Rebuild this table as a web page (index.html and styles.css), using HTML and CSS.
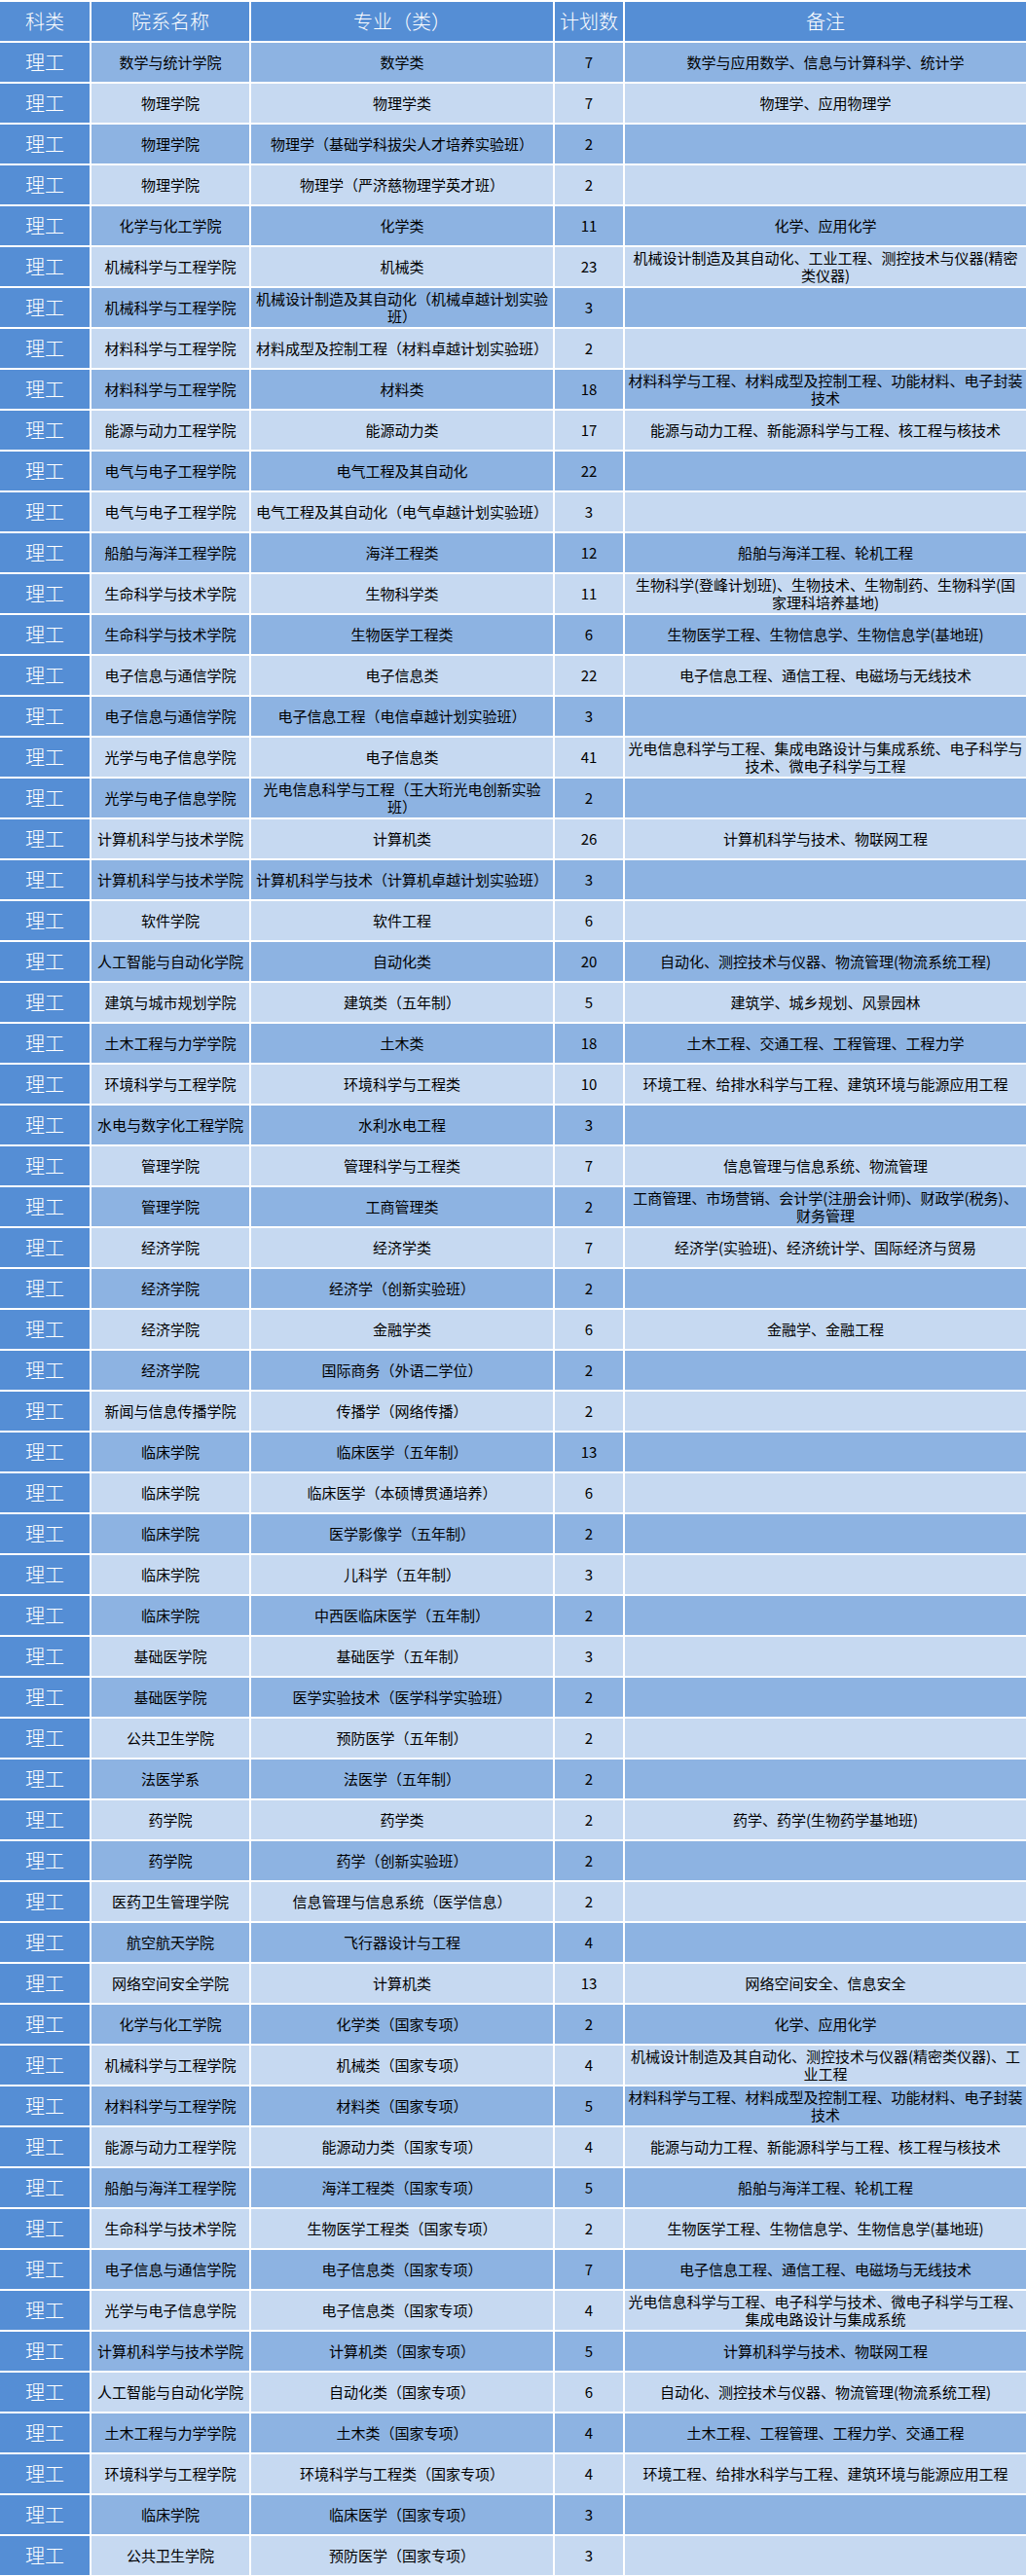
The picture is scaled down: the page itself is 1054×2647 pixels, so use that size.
FILE: index.html
```html
<!DOCTYPE html>
<html lang="zh-CN">
<head>
<meta charset="utf-8">
<title>招生计划</title>
<link rel="stylesheet" href="styles.css">
</head>
<body>
<div class="sheet">
<div class="r hd"><div>科类</div><div>院系名称</div><div>专业（类）</div><div>计划数</div><div>备注</div></div>
<div class="r m"><div class="k">理工</div><div class="c">数学与统计学院</div><div class="c">数学类</div><div class="c">7</div><div class="c">数学与应用数学、信息与计算科学、统计学</div></div>
<div class="r l"><div class="k">理工</div><div class="c">物理学院</div><div class="c">物理学类</div><div class="c">7</div><div class="c">物理学、应用物理学</div></div>
<div class="r m"><div class="k">理工</div><div class="c">物理学院</div><div class="c">物理学（基础学科拔尖人才培养实验班）</div><div class="c">2</div><div class="c"></div></div>
<div class="r l"><div class="k">理工</div><div class="c">物理学院</div><div class="c">物理学（严济慈物理学英才班）</div><div class="c">2</div><div class="c"></div></div>
<div class="r m"><div class="k">理工</div><div class="c">化学与化工学院</div><div class="c">化学类</div><div class="c">11</div><div class="c">化学、应用化学</div></div>
<div class="r l"><div class="k">理工</div><div class="c">机械科学与工程学院</div><div class="c">机械类</div><div class="c">23</div><div class="c">机械设计制造及其自动化、工业工程、测控技术与仪器(精密<br>类仪器)</div></div>
<div class="r m"><div class="k">理工</div><div class="c">机械科学与工程学院</div><div class="c">机械设计制造及其自动化（机械卓越计划实验<br>班）</div><div class="c">3</div><div class="c"></div></div>
<div class="r l"><div class="k">理工</div><div class="c">材料科学与工程学院</div><div class="c">材料成型及控制工程（材料卓越计划实验班）</div><div class="c">2</div><div class="c"></div></div>
<div class="r m"><div class="k">理工</div><div class="c">材料科学与工程学院</div><div class="c">材料类</div><div class="c">18</div><div class="c">材料科学与工程、材料成型及控制工程、功能材料、电子封装<br>技术</div></div>
<div class="r l"><div class="k">理工</div><div class="c">能源与动力工程学院</div><div class="c">能源动力类</div><div class="c">17</div><div class="c">能源与动力工程、新能源科学与工程、核工程与核技术</div></div>
<div class="r m"><div class="k">理工</div><div class="c">电气与电子工程学院</div><div class="c">电气工程及其自动化</div><div class="c">22</div><div class="c"></div></div>
<div class="r l"><div class="k">理工</div><div class="c">电气与电子工程学院</div><div class="c">电气工程及其自动化（电气卓越计划实验班）</div><div class="c">3</div><div class="c"></div></div>
<div class="r m"><div class="k">理工</div><div class="c">船舶与海洋工程学院</div><div class="c">海洋工程类</div><div class="c">12</div><div class="c">船舶与海洋工程、轮机工程</div></div>
<div class="r l"><div class="k">理工</div><div class="c">生命科学与技术学院</div><div class="c">生物科学类</div><div class="c">11</div><div class="c">生物科学(登峰计划班)、生物技术、生物制药、生物科学(国<br>家理科培养基地)</div></div>
<div class="r m"><div class="k">理工</div><div class="c">生命科学与技术学院</div><div class="c">生物医学工程类</div><div class="c">6</div><div class="c">生物医学工程、生物信息学、生物信息学(基地班)</div></div>
<div class="r l"><div class="k">理工</div><div class="c">电子信息与通信学院</div><div class="c">电子信息类</div><div class="c">22</div><div class="c">电子信息工程、通信工程、电磁场与无线技术</div></div>
<div class="r m"><div class="k">理工</div><div class="c">电子信息与通信学院</div><div class="c">电子信息工程（电信卓越计划实验班）</div><div class="c">3</div><div class="c"></div></div>
<div class="r l"><div class="k">理工</div><div class="c">光学与电子信息学院</div><div class="c">电子信息类</div><div class="c">41</div><div class="c">光电信息科学与工程、集成电路设计与集成系统、电子科学与<br>技术、微电子科学与工程</div></div>
<div class="r m"><div class="k">理工</div><div class="c">光学与电子信息学院</div><div class="c">光电信息科学与工程（王大珩光电创新实验<br>班）</div><div class="c">2</div><div class="c"></div></div>
<div class="r l"><div class="k">理工</div><div class="c">计算机科学与技术学院</div><div class="c">计算机类</div><div class="c">26</div><div class="c">计算机科学与技术、物联网工程</div></div>
<div class="r m"><div class="k">理工</div><div class="c">计算机科学与技术学院</div><div class="c">计算机科学与技术（计算机卓越计划实验班）</div><div class="c">3</div><div class="c"></div></div>
<div class="r l"><div class="k">理工</div><div class="c">软件学院</div><div class="c">软件工程</div><div class="c">6</div><div class="c"></div></div>
<div class="r m"><div class="k">理工</div><div class="c">人工智能与自动化学院</div><div class="c">自动化类</div><div class="c">20</div><div class="c">自动化、测控技术与仪器、物流管理(物流系统工程)</div></div>
<div class="r l"><div class="k">理工</div><div class="c">建筑与城市规划学院</div><div class="c">建筑类（五年制）</div><div class="c">5</div><div class="c">建筑学、城乡规划、风景园林</div></div>
<div class="r m"><div class="k">理工</div><div class="c">土木工程与力学学院</div><div class="c">土木类</div><div class="c">18</div><div class="c">土木工程、交通工程、工程管理、工程力学</div></div>
<div class="r l"><div class="k">理工</div><div class="c">环境科学与工程学院</div><div class="c">环境科学与工程类</div><div class="c">10</div><div class="c">环境工程、给排水科学与工程、建筑环境与能源应用工程</div></div>
<div class="r m"><div class="k">理工</div><div class="c">水电与数字化工程学院</div><div class="c">水利水电工程</div><div class="c">3</div><div class="c"></div></div>
<div class="r l"><div class="k">理工</div><div class="c">管理学院</div><div class="c">管理科学与工程类</div><div class="c">7</div><div class="c">信息管理与信息系统、物流管理</div></div>
<div class="r m"><div class="k">理工</div><div class="c">管理学院</div><div class="c">工商管理类</div><div class="c">2</div><div class="c">工商管理、市场营销、会计学(注册会计师)、财政学(税务)、<br>财务管理</div></div>
<div class="r l"><div class="k">理工</div><div class="c">经济学院</div><div class="c">经济学类</div><div class="c">7</div><div class="c">经济学(实验班)、经济统计学、国际经济与贸易</div></div>
<div class="r m"><div class="k">理工</div><div class="c">经济学院</div><div class="c">经济学（创新实验班）</div><div class="c">2</div><div class="c"></div></div>
<div class="r l"><div class="k">理工</div><div class="c">经济学院</div><div class="c">金融学类</div><div class="c">6</div><div class="c">金融学、金融工程</div></div>
<div class="r m"><div class="k">理工</div><div class="c">经济学院</div><div class="c">国际商务（外语二学位）</div><div class="c">2</div><div class="c"></div></div>
<div class="r l"><div class="k">理工</div><div class="c">新闻与信息传播学院</div><div class="c">传播学（网络传播）</div><div class="c">2</div><div class="c"></div></div>
<div class="r m"><div class="k">理工</div><div class="c">临床学院</div><div class="c">临床医学（五年制）</div><div class="c">13</div><div class="c"></div></div>
<div class="r l"><div class="k">理工</div><div class="c">临床学院</div><div class="c">临床医学（本硕博贯通培养）</div><div class="c">6</div><div class="c"></div></div>
<div class="r m"><div class="k">理工</div><div class="c">临床学院</div><div class="c">医学影像学（五年制）</div><div class="c">2</div><div class="c"></div></div>
<div class="r l"><div class="k">理工</div><div class="c">临床学院</div><div class="c">儿科学（五年制）</div><div class="c">3</div><div class="c"></div></div>
<div class="r m"><div class="k">理工</div><div class="c">临床学院</div><div class="c">中西医临床医学（五年制）</div><div class="c">2</div><div class="c"></div></div>
<div class="r l"><div class="k">理工</div><div class="c">基础医学院</div><div class="c">基础医学（五年制）</div><div class="c">3</div><div class="c"></div></div>
<div class="r m"><div class="k">理工</div><div class="c">基础医学院</div><div class="c">医学实验技术（医学科学实验班）</div><div class="c">2</div><div class="c"></div></div>
<div class="r l"><div class="k">理工</div><div class="c">公共卫生学院</div><div class="c">预防医学（五年制）</div><div class="c">2</div><div class="c"></div></div>
<div class="r m"><div class="k">理工</div><div class="c">法医学系</div><div class="c">法医学（五年制）</div><div class="c">2</div><div class="c"></div></div>
<div class="r l"><div class="k">理工</div><div class="c">药学院</div><div class="c">药学类</div><div class="c">2</div><div class="c">药学、药学(生物药学基地班)</div></div>
<div class="r m"><div class="k">理工</div><div class="c">药学院</div><div class="c">药学（创新实验班）</div><div class="c">2</div><div class="c"></div></div>
<div class="r l"><div class="k">理工</div><div class="c">医药卫生管理学院</div><div class="c">信息管理与信息系统（医学信息）</div><div class="c">2</div><div class="c"></div></div>
<div class="r m"><div class="k">理工</div><div class="c">航空航天学院</div><div class="c">飞行器设计与工程</div><div class="c">4</div><div class="c"></div></div>
<div class="r l"><div class="k">理工</div><div class="c">网络空间安全学院</div><div class="c">计算机类</div><div class="c">13</div><div class="c">网络空间安全、信息安全</div></div>
<div class="r m"><div class="k">理工</div><div class="c">化学与化工学院</div><div class="c">化学类（国家专项）</div><div class="c">2</div><div class="c">化学、应用化学</div></div>
<div class="r l"><div class="k">理工</div><div class="c">机械科学与工程学院</div><div class="c">机械类（国家专项）</div><div class="c">4</div><div class="c">机械设计制造及其自动化、测控技术与仪器(精密类仪器)、工<br>业工程</div></div>
<div class="r m"><div class="k">理工</div><div class="c">材料科学与工程学院</div><div class="c">材料类（国家专项）</div><div class="c">5</div><div class="c">材料科学与工程、材料成型及控制工程、功能材料、电子封装<br>技术</div></div>
<div class="r l"><div class="k">理工</div><div class="c">能源与动力工程学院</div><div class="c">能源动力类（国家专项）</div><div class="c">4</div><div class="c">能源与动力工程、新能源科学与工程、核工程与核技术</div></div>
<div class="r m"><div class="k">理工</div><div class="c">船舶与海洋工程学院</div><div class="c">海洋工程类（国家专项）</div><div class="c">5</div><div class="c">船舶与海洋工程、轮机工程</div></div>
<div class="r l"><div class="k">理工</div><div class="c">生命科学与技术学院</div><div class="c">生物医学工程类（国家专项）</div><div class="c">2</div><div class="c">生物医学工程、生物信息学、生物信息学(基地班)</div></div>
<div class="r m"><div class="k">理工</div><div class="c">电子信息与通信学院</div><div class="c">电子信息类（国家专项）</div><div class="c">7</div><div class="c">电子信息工程、通信工程、电磁场与无线技术</div></div>
<div class="r l"><div class="k">理工</div><div class="c">光学与电子信息学院</div><div class="c">电子信息类（国家专项）</div><div class="c">4</div><div class="c">光电信息科学与工程、电子科学与技术、微电子科学与工程、<br>集成电路设计与集成系统</div></div>
<div class="r m"><div class="k">理工</div><div class="c">计算机科学与技术学院</div><div class="c">计算机类（国家专项）</div><div class="c">5</div><div class="c">计算机科学与技术、物联网工程</div></div>
<div class="r l"><div class="k">理工</div><div class="c">人工智能与自动化学院</div><div class="c">自动化类（国家专项）</div><div class="c">6</div><div class="c">自动化、测控技术与仪器、物流管理(物流系统工程)</div></div>
<div class="r m"><div class="k">理工</div><div class="c">土木工程与力学学院</div><div class="c">土木类（国家专项）</div><div class="c">4</div><div class="c">土木工程、工程管理、工程力学、交通工程</div></div>
<div class="r l"><div class="k">理工</div><div class="c">环境科学与工程学院</div><div class="c">环境科学与工程类（国家专项）</div><div class="c">4</div><div class="c">环境工程、给排水科学与工程、建筑环境与能源应用工程</div></div>
<div class="r m"><div class="k">理工</div><div class="c">临床学院</div><div class="c">临床医学（国家专项）</div><div class="c">3</div><div class="c"></div></div>
<div class="r l"><div class="k">理工</div><div class="c">公共卫生学院</div><div class="c">预防医学（国家专项）</div><div class="c">3</div><div class="c"></div></div>
</div>
</body>
</html>
```
FILE: styles.css
```css
html, body {
  margin: 0;
  padding: 0;
  background: #ffffff;
}

body {
  font-family: "Noto Sans CJK SC", "Noto Sans", "Liberation Sans", sans-serif;
  font-size: 15px;
  color: #000000;
}

.sheet {
  width: 1054px;
  padding-top: 2px;
  padding-bottom: 1px;
  display: flex;
  flex-direction: column;
  gap: 2px;
  background: #ffffff;
}

.r {
  display: grid;
  grid-template-columns: 92px 162px 310px 70px 412px;
  column-gap: 2px;
  height: 40px;
}

.r > div {
  display: flex;
  align-items: center;
  justify-content: center;
  text-align: center;
  line-height: 18px;
  white-space: nowrap;
  overflow: hidden;
}

.hd > div {
  background: #558ed5;
  color: #ffffff;
  font-size: 20px;
  font-weight: 300;
}

.r > .k {
  background: #558ed5;
  color: #ffffff;
  font-size: 20px;
  font-weight: 300;
}

.m > .c {
  background: #8db3e2;
}

.l > .c {
  background: #c6d9f1;
}
```
